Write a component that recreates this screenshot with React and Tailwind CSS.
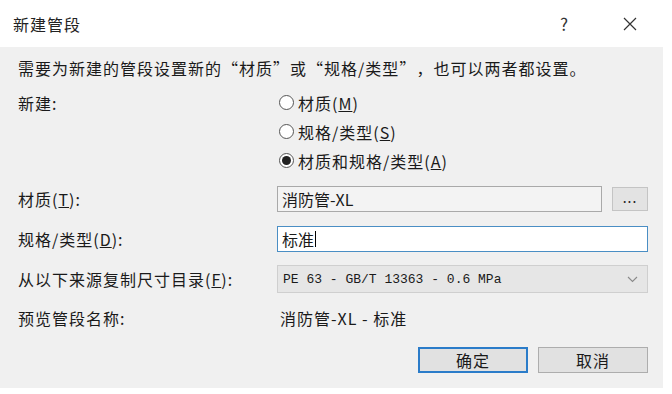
import React from "react";

const cjk = { fontFamily: '"Noto Sans CJK SC", "Noto Sans", sans-serif' };

// full-width quotation marks like the Windows CJK font
const Q = ({ children }) => (
  <span className="[font-feature-settings:'fwid']">{children}</span>
);

const Radio = ({ checked, children }) => (
  <div className="flex h-[29px] items-center gap-[4px]">
    <span className="flex h-[15px] w-[15px] items-center justify-center rounded-full border border-[#555] bg-white">
      {checked && <span className="h-[9px] w-[9px] rounded-full bg-[#222]" />}
    </span>
    <span>{children}</span>
  </div>
);

const Row = ({ label, className, children }) => (
  <div className={"flex items-center " + className}>
    <div className="w-[259px] shrink-0">{label}</div>
    <div className="flex flex-1 items-center">{children}</div>
  </div>
);

export default function App() {
  return (
    <div className="min-h-screen bg-white" style={cjk}>
      <div className="w-[663px] text-[16px] leading-none tracking-[1px] text-[#1a1a1a]">
        {/* title bar */}
        <div className="flex h-[47px] items-center bg-white pl-[13px] pr-[26px]">
          <span className="flex-1 text-[16px] text-[#222]">新建管段</span>
          <span className="mr-[54px] text-[17px] text-[#333]">?</span>
          <svg width="14" height="14" viewBox="0 0 14 14" className="text-[#333]">
            <path d="M1 1L13 13M13 1L1 13" stroke="currentColor" strokeWidth="1.2" />
          </svg>
        </div>

        {/* body */}
        <div className="bg-[#f0f0f0] pb-[15px] pl-[18px] pr-[15px] pt-[7px]">
          <div className="flex h-[28px] items-center">
            需要为新建的管段设置新的<Q>“</Q>材质<Q>”</Q>或<Q>“</Q>规格/类型<Q>”</Q>，也可以两者都设置。
          </div>

          <div className="mt-[6px] flex">
            <div className="w-[261px] shrink-0 pt-[7px]">新建:</div>
            <div className="flex flex-col">
              <Radio>
                材质(<span className="underline">M</span>)
              </Radio>
              <Radio>
                规格/类型(<span className="underline">S</span>)
              </Radio>
              <Radio checked>
                材质和规格/类型(<span className="underline">A</span>)
              </Radio>
            </div>
          </div>

          <Row
            className="mt-[11px]"
            label={
              <>
                材质(<span className="underline">T</span>):
              </>
            }
          >
            <div className="flex h-[26px] flex-1 items-center border border-[#a9a9a9] bg-[#f3f3f3] px-[4px] tracking-normal">
              消防管-XL
            </div>
            <button className="ml-[10px] flex h-[24px] w-[36px] items-center justify-center border border-[#c4c4c4] bg-[#e3e3e3] pb-[4px] text-[14px] tracking-[1px] text-[#222]">
              ...
            </button>
          </Row>

          <Row
            className="mt-[14px]"
            label={
              <>
                规格/类型(<span className="underline">D</span>):
              </>
            }
          >
            <div className="flex h-[26px] flex-1 items-center border border-[#4a8ec4] bg-white px-[4px] tracking-normal">
              标准
              <span className="ml-[1px] h-[16px] w-[1px] bg-black" />
            </div>
          </Row>

          <Row
            className="mt-[13px]"
            label={
              <>
                从以下来源复制尺寸目录(<span className="underline">F</span>):
              </>
            }
          >
            <div className="flex h-[28px] flex-1 items-center border border-[#cfcfcf] bg-[#e6e6e6] pl-[5px] pr-[9px] tracking-normal">
              <span className="flex-1 text-[13px]" style={{ fontFamily: '"Liberation Mono", monospace' }}>
                PE 63 - GB/T 13363 - 0.6 MPa
              </span>
              <svg width="11" height="7" viewBox="0 0 11 7">
                <path d="M1 1L5.5 5.5L10 1" fill="none" stroke="#8a8a8a" strokeWidth="1.1" />
              </svg>
            </div>
          </Row>

          <Row className="mt-[15px] h-[20px]" label="预览管段名称:">
            <span className="pl-[3px]">消防管-XL - 标准</span>
          </Row>

          <div className="mt-[19px] flex justify-end gap-[10px]">
            <button className="h-[26px] w-[110px] border-2 border-[#2b7cc9] bg-[#e1e1e1] text-[16px] text-[#1a1a1a]">
              确定
            </button>
            <button className="h-[26px] w-[110px] border border-[#adadad] bg-[#e1e1e1] text-[16px] text-[#1a1a1a]">
              取消
            </button>
          </div>
        </div>
      </div>
    </div>
  );
}
